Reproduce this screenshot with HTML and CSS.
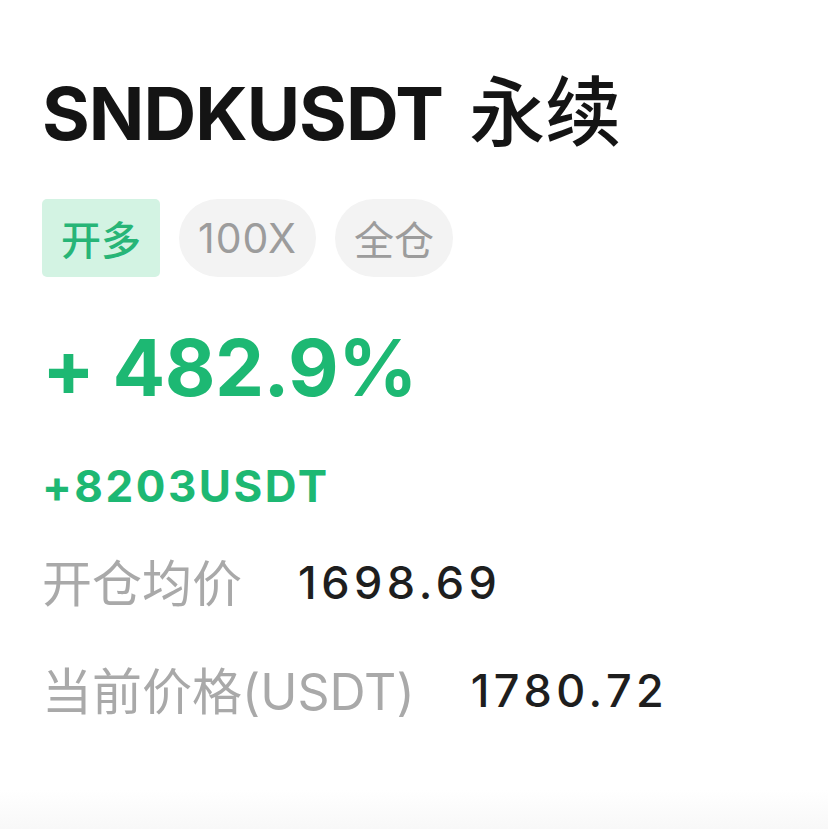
FILE: index.html
```html
<!DOCTYPE html>
<html lang="zh-CN">
<head>
<meta charset="utf-8">
<link rel="stylesheet" href="styles.css">
</head>
<body>
<main class="card">
  <h1 class="title">SNDKUSDT <span class="title-cn">永续</span></h1>
  <div class="tags">
    <span class="tag tag-long">开多</span>
    <span class="tag tag-pill tag-lev">100X</span>
    <span class="tag tag-pill">全仓</span>
  </div>
  <div class="pct">+ 482.9%</div>
  <div class="pnl">+8203USDT</div>
  <div class="row row-first">
    <span class="label">开仓均价</span>
    <span class="value">1698.69</span>
  </div>
  <div class="row">
    <span class="label">当前价格(USDT)</span>
    <span class="value">1780.72</span>
  </div>
</main>
</body>
</html>
```
FILE: styles.css
```css
html, body {
  margin: 0;
  padding: 0;
}
body {
  width: 828px;
  height: 829px;
  background: linear-gradient(to bottom, #ffffff 0, #ffffff 790px, #f8f8f8 829px);
  font-family: Inter, "Noto Sans CJK SC", sans-serif;
  overflow: hidden;
}
.card {
  padding: 76px 0 0 42px;
  display: flex;
  flex-direction: column;
  align-items: flex-start;
}
.title {
  margin: 0;
  height: 75px;
  font-size: 73px;
  line-height: 75px;
  font-weight: 700;
  color: #141414;
  letter-spacing: -1px;
}
.title-cn {
  font-family: "Noto Sans CJK SC", sans-serif;
  font-size: 76px;
  line-height: 0;
  font-weight: 500;
  letter-spacing: 0;
  margin-left: 10px;
}
.tags {
  margin-top: 48px;
  display: flex;
  gap: 19px;
}
.tag {
  height: 78px;
  padding: 0 19px;
  display: flex;
  align-items: center;
  font-size: 40px;
}
.tag-long {
  background: #d3f3e3;
  color: #27b577;
  border-radius: 5px;
  font-weight: 500;
}
.tag-pill {
  background: #f3f3f3;
  color: #9c9c9c;
  border-radius: 39px;
}
.tag-lev {
  padding: 0 19px;
  font-size: 41px;
  letter-spacing: 1px;
}
.pct {
  margin-top: 50px;
  font-size: 78px;
  line-height: 82px;
  font-weight: 700;
  color: #1db873;
  letter-spacing: -0.5px;
}
.pnl {
  margin-top: 54px;
  font-size: 44px;
  line-height: 46px;
  font-weight: 700;
  color: #1db873;
  letter-spacing: 2.5px;
}
.row {
  display: flex;
  align-items: baseline;
  gap: 56px;
  margin-top: 48px;
}
.row-first {
  margin-top: 45px;
}
.label {
  font-size: 50px;
  line-height: 60px;
  color: #a9a9a9;
}
.value {
  font-size: 45px;
  font-weight: 500;
  color: #1e1e1e;
  letter-spacing: 4.5px;
  position: relative;
  top: -3px;
}
```
